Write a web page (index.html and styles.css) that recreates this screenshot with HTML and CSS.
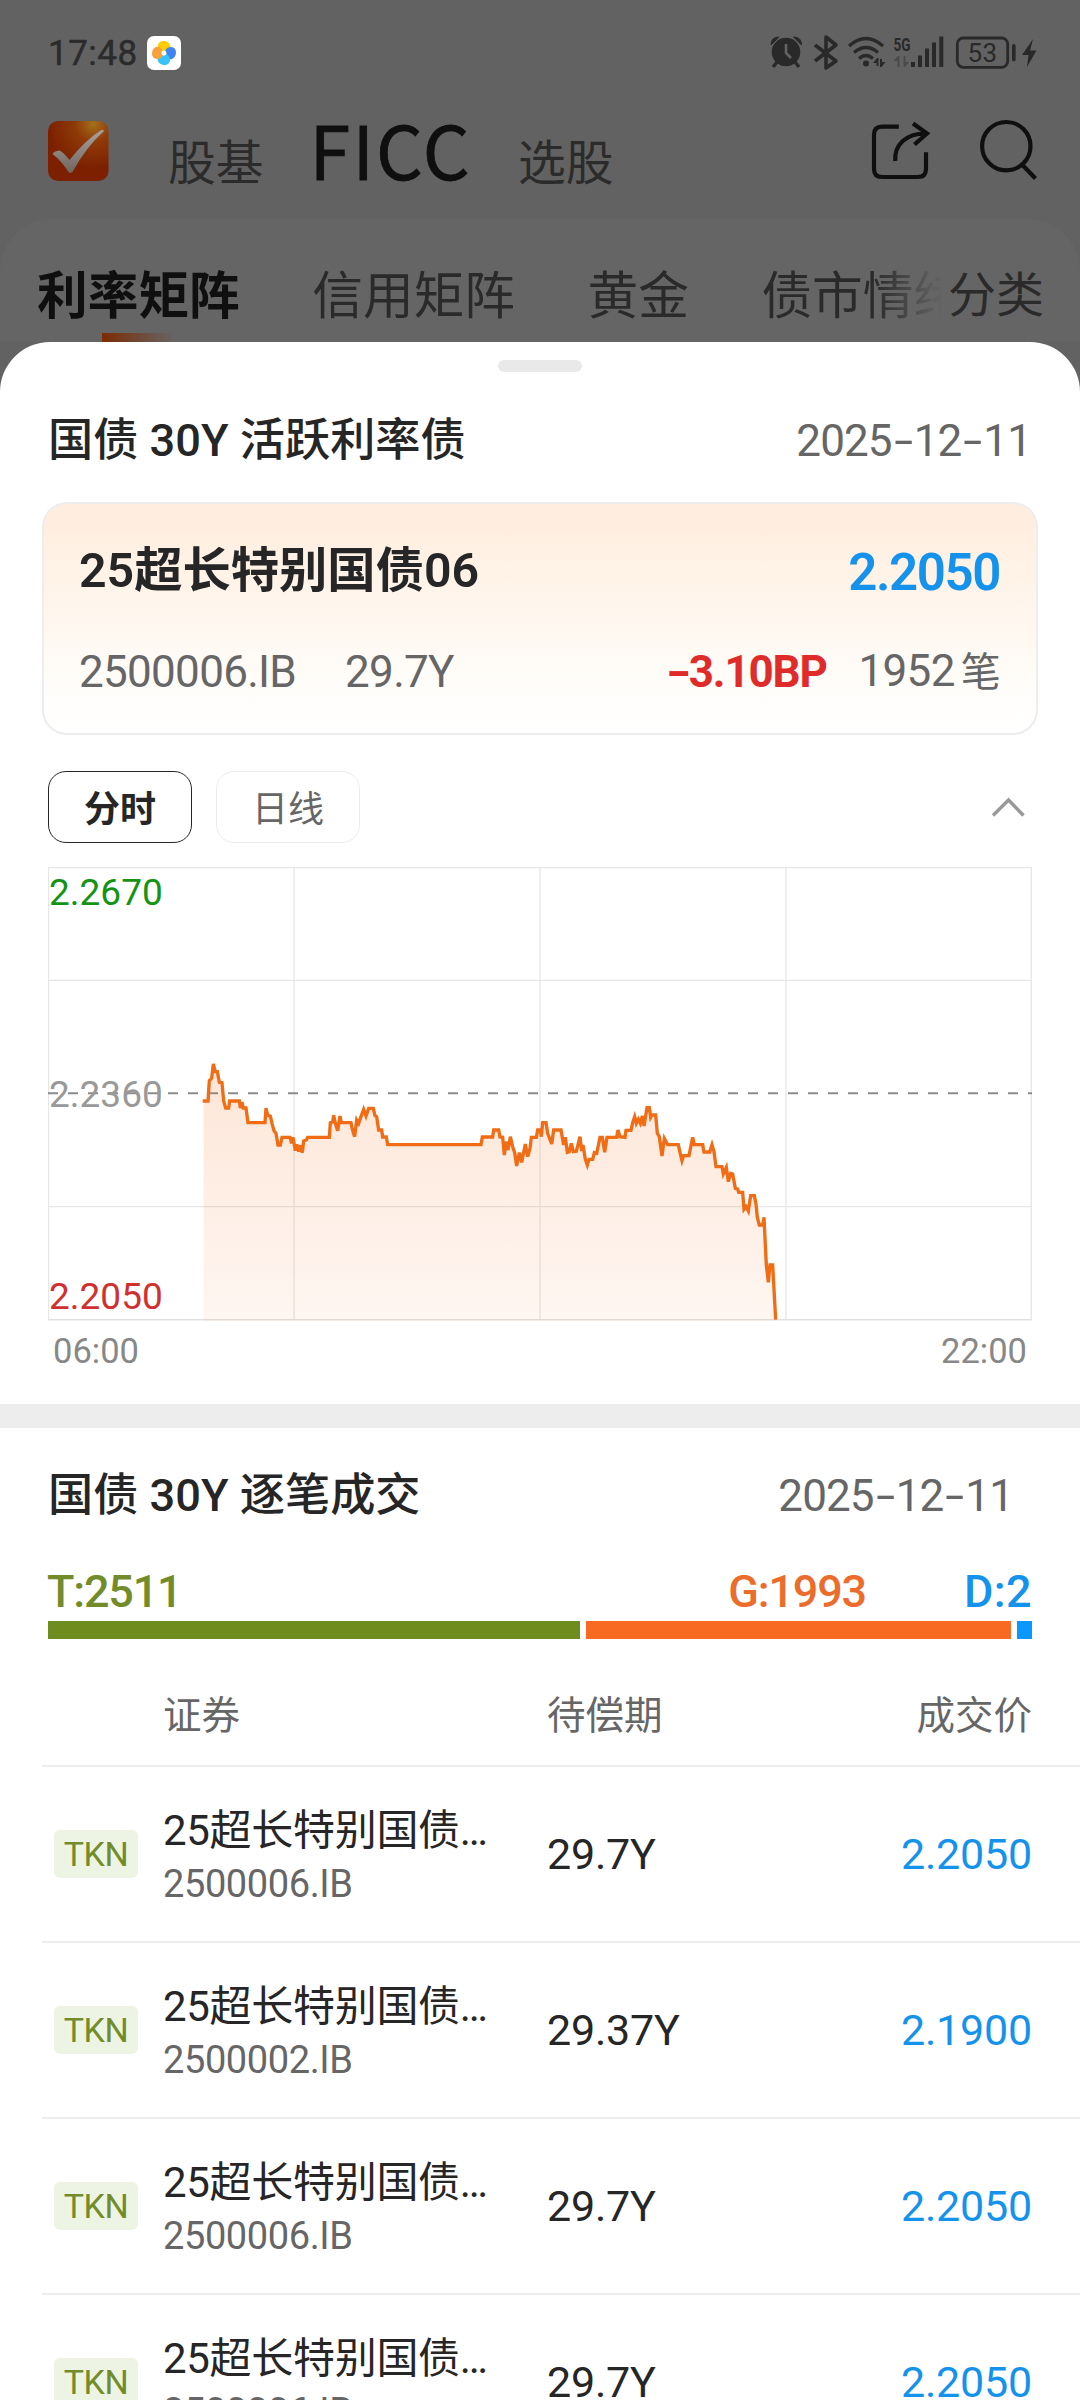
FILE: index.html
```html
<!DOCTYPE html>
<html lang="zh-CN">
<head>
<meta charset="utf-8">
<title>FICC 利率矩阵</title>
<link rel="stylesheet" href="styles.css">
</head>
<body>
<div class="status">
  <span class="clock">17:48</span>
  <svg class="app-badge" width="34" height="34" viewBox="-17 -17 34 34">
    <rect x="-17" y="-17" width="34" height="34" rx="7" fill="#fff"/>
    <path d="M-6 -7C-6 -13.500 4 -13.500 6 -8C7 -5 5.500 -2.500 3 -1.500C2 -3 -1 -3 -2.200 -1C-5 -2.500 -6 -4.500 -6 -7Z" fill="#fc0"/>
    <path transform="rotate(90)" d="M-6 -7C-6 -13.500 4 -13.500 6 -8C7 -5 5.500 -2.500 3 -1.500C2 -3 -1 -3 -2.200 -1C-5 -2.500 -6 -4.500 -6 -7Z" fill="#3f84f0"/>
    <path transform="rotate(180)" d="M-6 -7C-6 -13.500 4 -13.500 6 -8C7 -5 5.500 -2.500 3 -1.500C2 -3 -1 -3 -2.200 -1C-5 -2.500 -6 -4.500 -6 -7Z" fill="#38c1fa"/>
    <path transform="rotate(270)" d="M-6 -7C-6 -13.500 4 -13.500 6 -8C7 -5 5.500 -2.500 3 -1.500C2 -3 -1 -3 -2.200 -1C-5 -2.500 -6 -4.500 -6 -7Z" fill="#f7a13c"/>
    <circle r="2.200" fill="#fff"/>
  </svg>
  <svg class="status-icons" width="268" height="36" viewBox="770 35 268 36">
    <g fill="#292929">
      <circle cx="786" cy="52" r="14.300"/>
      <path d="M771 45q0-8 8-8zM801.500 45q0-8-8-8z" stroke="#292929" stroke-width="1"/>
      <path d="M777 62l-4 5M795 62l4 5" stroke="#292929" stroke-width="3.500"/>
      <path d="M786 44v9l5 5" fill="none" stroke="#636363" stroke-width="2.600"/>
      <path d="M815 45l21 16-10 7V37l10 8-21 16" fill="none" stroke="#292929" stroke-width="3.600" stroke-linejoin="round"/>
      <path d="M849 46q17-15 34 0M854 52.500q12-10 24 0M859 58.500q7-6 14 0" fill="none" stroke="#292929" stroke-width="3.200"/>
      <circle cx="866" cy="63.500" r="3"/>
      <path d="M873 63l4-5h1.500v8h-2v-3zM885.500 62l-4 5H880v-8h2v3z"/>
      <path d="M893 61l5-5h1.500v11h-2v-6zM909 62l-4 5h-1.500V56h2v6z" opacity=".4"/>
      <path d="M911 62h4v5H911zM918 55.500h4V67H918zM925 48.500h4V67H925zM932 42.500h4V67H932zM939.300 36.500h4V67h-4z"/>
      <rect x="957.300" y="38" width="50.400" height="29.300" rx="6" fill="none" stroke="#292929" stroke-width="2.800"/>
      <rect x="1012" y="44" width="3.600" height="17.500" rx="1.800"/>
      <path d="M1033 39l-11 16h6.500l-1.500 12 9.500-16.500H1030z"/>
      <text x="893.500" y="50.500" class="net" textLength="17" lengthAdjust="spacingAndGlyphs">5G</text>
      <text x="982.500" y="61.500" class="battery" text-anchor="middle">53</text>
    </g>
  </svg>
</div>

<header class="topbar">
  <svg class="logo" width="61" height="61" viewBox="48 121 61 61">
    <defs>
      <radialGradient id="lg" cx=".75" cy=".05" r=".75"><stop offset="0" stop-color="#a4701a"/><stop offset=".4" stop-color="#8f3a08"/><stop offset="1" stop-color="#7c2000"/></radialGradient>
      <linearGradient id="ck" x1="0" y1="0" x2="0" y2="1"><stop offset="0" stop-color="#a8a29e"/><stop offset="1" stop-color="#6f6560"/></linearGradient>
    </defs>
    <rect x="48" y="121" width="60.500" height="60" rx="10" fill="url(#lg)"/>
    <path d="M52.500 154q1-3 7-3.500 4 2 10 9.500 16-20 31-29.500 4-2 3 1-17 15-31 40.500-2 2-4 0-7-11-16-18z" fill="url(#ck)"/>
  </svg>
  <nav class="main-nav">
    <span>股基</span><span class="on">FICC</span><span>选股</span>
  </nav>
  <svg width="170" height="64" viewBox="870 119 170 64" fill="none" stroke="#0f0f0f" stroke-width="4.200">
    <path d="M898.800 126.700H882q-8 0-8 8V169q0 8 8 8H918q8 0 8-8V152.300"/>
    <path d="M895.300 161C894 145 906 133 926.500 133.500M913 123.500l14 10-12.500 11"/>
    <circle cx="1006.300" cy="146.200" r="24.200"/>
    <path d="M1021.500 164l14 14.500"/>
  </svg>
</header>

<div class="panel">
  <div class="cats">
    <span class="on">利率矩阵</span><span>信用矩阵</span><span>黄金</span><span class="fade">债市情绪</span>
  </div>
  <span class="sort">分类</span>
  <i class="underline"></i>
</div>

<main class="sheet">
  <i class="handle"></i>
  <div class="title-row">
    <h2>国债 30Y 活跃利率债</h2>
    <span class="date">2025<b>-</b>12<b>-</b>11</span>
  </div>
  <section class="card">
    <div class="card-row top"><span class="name">25超长特别国债06</span><span class="price">2.2050</span></div>
    <div class="card-row sub">
      <span class="code">2500006.IB</span><span class="term">29.7Y</span>
      <span class="bp"><b>-</b>3.10BP</span><span class="count">1952<em>笔</em></span>
    </div>
  </section>
  <div class="switch">
    <button class="on">分时</button><button>日线</button>
    <svg width="36" height="24" viewBox="990 794 36 24" fill="none" stroke="#999" stroke-width="3.400"><path d="M993 814.500l15.500-15.500 15 15.500"/></svg>
  </div>
  <div class="chart">
    <svg width="984" height="454" viewBox="0 0 2952 1362">
      <defs><linearGradient id="area" x1="0" y1="590" x2="0" y2="1358" gradientUnits="userSpaceOnUse"><stop offset="0" stop-color="#f56a16" stop-opacity=".17"/><stop offset="1" stop-color="#f56a16" stop-opacity=".06"/></linearGradient></defs>
      <path d="M1.500 2H2950V1358H1.500ZM1.500 340H2950M1.500 1019H2950M738 2V1358M1476 2V1358M2214 2V1358" fill="none" stroke="#e7e7e7" stroke-width="4"/>
      <path d="M0 1358H2952" stroke="#e0e0e0" stroke-width="4"/>
      <path d="M0 679H2952" stroke="#8c8c8c" stroke-width="6" stroke-dasharray="30 30"/>
      <path class="area" fill="url(#area)" d="M467 1362V702L480 702 484 641 491 634 496 591 502 614 508 614 514 646 522 647 527 702 533 723 542 723 545 702 574 702 577 723 582 705 586 723 594 723 600 767 651 767 654 723 659 745 667 747 672 769 678 791 684 799 690 834 697 834 702 811 726 811 731 829 735 811 742 851 746 832 752 854 756 834 763 857 767 822 775 819 779 811 844 811 847 767 854 765 857 745 862 769 869 791 876 747 880 767 909 767 913 787 920 809 926 759 932 769 940 746 947 727 954 747 962 724 976 724 981 746 986 749 992 789 1001 789 1004 810 1015 810 1019 833 1299 833 1303 810 1334 810 1337 789 1352 789 1356 810 1364 811 1369 864 1374 824 1380 849 1387 809 1394 839 1400 857 1406 897 1414 857 1421 886 1432 831 1439 869 1446 844 1450 811 1465 811 1469 789 1477 789 1480 809 1484 767 1494 767 1499 799 1511 831 1517 789 1539 789 1547 834 1552 811 1558 856 1564 854 1570 829 1576 854 1585 853 1596 809 1601 852 1605 834 1612 877 1618 894 1623 877 1634 877 1639 857 1646 859 1656 811 1663 811 1670 856 1677 811 1706 811 1710 789 1716 809 1731 811 1734 790 1749 790 1754 767 1760 749 1765 769 1771 757 1777 769 1783 747 1788 777 1797 722 1804 722 1808 751 1812 744 1823 744 1828 799 1834 809 1842 867 1849 814 1859 833 1891 833 1896 856 1902 881 1907 866 1923 866 1934 811 1939 833 1964 833 1968 855 1985 855 1992 833 1998 854 2004 899 2022 899 2026 921 2035 901 2041 944 2048 919 2054 921 2062 964 2069 966 2072 976 2084 976 2088 1027 2094 1019 2101 1032 2108 986 2119 986 2124 1011 2128 1051 2134 1074 2144 1074 2148 1051 2155 1194 2161 1246 2166 1194 2174 1194 2183 1358V1362Z"/>
      <path fill="none" stroke="#f06c15" stroke-width="10" d="M464 702L480 702 484 641 491 634 496 591 502 614 508 614 514 646 522 647 527 702 533 723 542 723 545 702 574 702 577 723 582 705 586 723 594 723 600 767 651 767 654 723 659 745 667 747 672 769 678 791 684 799 690 834 697 834 702 811 726 811 731 829 735 811 742 851 746 832 752 854 756 834 763 857 767 822 775 819 779 811 844 811 847 767 854 765 857 745 862 769 869 791 876 747 880 767 909 767 913 787 920 809 926 759 932 769 940 746 947 727 954 747 962 724 976 724 981 746 986 749 992 789 1001 789 1004 810 1015 810 1019 833 1299 833 1303 810 1334 810 1337 789 1352 789 1356 810 1364 811 1369 864 1374 824 1380 849 1387 809 1394 839 1400 857 1406 897 1414 857 1421 886 1432 831 1439 869 1446 844 1450 811 1465 811 1469 789 1477 789 1480 809 1484 767 1494 767 1499 799 1511 831 1517 789 1539 789 1547 834 1552 811 1558 856 1564 854 1570 829 1576 854 1585 853 1596 809 1601 852 1605 834 1612 877 1618 894 1623 877 1634 877 1639 857 1646 859 1656 811 1663 811 1670 856 1677 811 1706 811 1710 789 1716 809 1731 811 1734 790 1749 790 1754 767 1760 749 1765 769 1771 757 1777 769 1783 747 1788 777 1797 722 1804 722 1808 751 1812 744 1823 744 1828 799 1834 809 1842 867 1849 814 1859 833 1891 833 1896 856 1902 881 1907 866 1923 866 1934 811 1939 833 1964 833 1968 855 1985 855 1992 833 1998 854 2004 899 2022 899 2026 921 2035 901 2041 944 2048 919 2054 921 2062 964 2069 966 2072 976 2084 976 2088 1027 2094 1019 2101 1032 2108 986 2119 986 2124 1011 2128 1051 2134 1074 2144 1074 2148 1051 2155 1194 2161 1246 2166 1194 2174 1194 2183 1358"/>
    </svg>
    <div class="y-axis"><span class="hi">2.2670</span><span class="mid">2.2360</span><span class="lo">2.2050</span></div>
  </div>
  <div class="x-axis"><span>06:00</span><span>22:00</span></div>

  <div class="divider"></div>

  <div class="title-row trades">
    <h2>国债 30Y 逐笔成交</h2>
    <span class="date">2025<b>-</b>12<b>-</b>11</span>
  </div>
  <div class="tally"><span class="t">T:2511</span><span class="g">G:1993</span><span class="d">D:2</span></div>
  <div class="bars"><i class="t"></i><i class="g"></i><i class="d"></i></div>

  <div class="grid head"><span></span><span>证券</span><span>待偿期</span><span class="end">成交价</span></div>
  <div class="grid row"><span class="tag">TKN</span><div><p>25超长特别国债<u>…</u></p><small>2500006.IB</small></div><span>29.7Y</span><span class="end val">2.2050</span></div>
  <div class="grid row"><span class="tag">TKN</span><div><p>25超长特别国债<u>…</u></p><small>2500002.IB</small></div><span>29.37Y</span><span class="end val">2.1900</span></div>
  <div class="grid row"><span class="tag">TKN</span><div><p>25超长特别国债<u>…</u></p><small>2500006.IB</small></div><span>29.7Y</span><span class="end val">2.2050</span></div>
  <div class="grid row"><span class="tag">TKN</span><div><p>25超长特别国债<u>…</u></p><small>2500006.IB</small></div><span>29.7Y</span><span class="end val">2.2050</span></div>
</main>
</body>
</html>
```
FILE: styles.css
```css
* { box-sizing: border-box; margin: 0; padding: 0; }
html, body { width: 1080px; height: 2400px; overflow: hidden; }
body {
  display: flex;
  flex-direction: column;
  background: #626262;
  color: #262626;
  font-family: Roboto, "Noto Sans CJK SC", sans-serif;
  white-space: nowrap;
}
i, em, u { font-style: normal; text-decoration: none; }

/* Status bar */
.status { display: flex; align-items: center; height: 106px; padding: 0 42px 0 48px; flex: none; }
.clock { width: 99px; font-size: 35px; letter-spacing: .5px; color: #2b2b2b; -webkit-text-stroke: .5px #2b2b2b; }
.status-icons { margin-left: auto; }
.net { font-size: 19px; font-weight: 700; }
.battery { font-size: 26px; letter-spacing: .5px; }

/* App header */
.topbar { display: flex; align-items: center; height: 113px; padding: 0 40px 23px 48px; flex: none; }
.main-nav { display: flex; align-items: center; flex: 1; margin-left: 59px; color: #2b2b2b; font-size: 47.800px; line-height: 64px; }
.main-nav span { padding-top: 25px; }
.main-nav .on { padding: 0 46px 7px 46px; font: 400 73.500px/90px "Noto Sans CJK SC", sans-serif; letter-spacing: 2.200px; color: #0f0f0f; -webkit-text-stroke: .8px #0f0f0f; }

/* Dimmed panel */
.panel { display: grid; grid-template-columns: 905px 1fr; height: 123px; padding: 44px 36px 0 37px; background: #656565; border-radius: 52px 52px 0 0; flex: none; position: relative; }
.cats { display: flex; gap: 72.500px; overflow: hidden; height: 68px; font-size: 50.700px; line-height: 68px; color: #2a2a2a; }
.cats .on { font-weight: 700; color: #0f0f0f; }
.cats .fade { background: linear-gradient(90deg, #2a2a2a 110px, #656565 182px); background-clip: text; -webkit-background-clip: text; color: transparent; }
.sort { font-size: 48px; line-height: 66px; color: #2a2a2a; margin-left: 6px; }
.underline { position: absolute; left: 102px; top: 114px; width: 72px; height: 9px; background: linear-gradient(90deg, #7d2b04, #656565); }

/* Bottom sheet */
.sheet { flex: none; height: 2058px; background: #fff; border-radius: 50px 50px 0 0; overflow: hidden; }
.handle { display: block; width: 84px; height: 12px; margin: 18px auto 0; border-radius: 6px; background: #e9e9e9; }
.title-row { display: flex; justify-content: space-between; align-items: center; height: 130px; padding: 7px 49px 0 48px; }
.title-row h2 { font-size: 45.200px; font-weight: 500; line-height: 60px; }
.date { font-size: 44px; letter-spacing: -.9px; color: #666; }
.date b, .bp b { display: inline-block; width: 22px; text-align: center; font-weight: inherit; transform: scaleX(1.550); }

.card { height: 233px; margin: 0 42px; padding: 0 36px 0 35px; border: 2px solid #ededed; border-radius: 25px; background: linear-gradient(#ffeedf 8%, #fffdfa 80%, #fff); }
.card-row { display: flex; align-items: center; }
.card-row.top { height: 137px; justify-content: space-between; }
.name { font-size: 48.300px; font-weight: 600; line-height: 64px; padding-bottom: 3px; }
.price { font-size: 51px; font-weight: 600; letter-spacing: -1.400px; color: #1492ec; }
.card-row.sub { height: 62px; font-size: 44px; letter-spacing: -.7px; color: #666; }
.term { margin-left: 49px; }
.bp { margin-left: auto; color: #e02b2b; font-weight: 700; letter-spacing: -1.200px; }
.count { margin-left: 32px; line-height: 60px; }
.count em { font-size: 40px; margin-left: 6px; }

.switch { display: flex; align-items: center; height: 72px; margin: 36px 54px 0 48px; gap: 24px; }
.switch button { width: 144px; height: 72px; padding-bottom: 3px; border: 1.500px solid #ebebeb; border-radius: 18px; background: #fff; font: 400 36px/64px "Noto Sans CJK SC", sans-serif; color: #666; }
.switch button.on { border-color: #262626; color: #262626; font-weight: 700; }
.switch svg { margin-left: auto; }

.chart { display: grid; margin: 24px 48px 0; height: 454px; }
.chart > * { grid-area: 1 / 1; }
.y-axis { display: flex; flex-direction: column; justify-content: space-between; height: 454px; padding: 4px 0 3px 1px; font-size: 37px; line-height: 43px; }
.hi { color: #149414; }
.mid { color: #999; }
.lo { color: #d03030; }
.x-axis { display: flex; justify-content: space-between; margin: 5px 53px 0 53px; height: 78px; font-size: 34.500px; line-height: 50px; color: #888; }

.divider { height: 24px; background: #ededed; }

/* Trade list */
.title-row.trades { height: 132px; padding: 4px 67px 0 48px; }
.tally { display: flex; height: 61px; padding: 1px 48px 0 47px; font-size: 45px; line-height: 62px; font-weight: 500; letter-spacing: -1.200px; }
.tally .t { color: #738c2b; }
.tally .g { color: #ec6c2c; margin-left: auto; }
.tally .d { color: #1492ec; margin-left: 98px; letter-spacing: .4px; }
.bars { display: flex; gap: 6px; height: 18px; margin: 0 48px; }
.bars .t { background: #6f8c1f; flex: 532; }
.bars .g { background: #f86a21; flex: 425; }
.bars .d { background: #0a98ff; flex: 15; }
.grid { display: grid; grid-template-columns: 121px 384px 1fr auto; align-items: center; margin-left: 42px; padding-right: 48px; border-bottom: 2px solid #ededed; }
.grid.head { height: 128px; padding-top: 19px; font-size: 38.500px; color: #666; }
.grid.row { height: 176px; font-size: 43px; letter-spacing: -.2px; }
.row .tag { width: 84px; height: 48px; margin-left: 12px; border-radius: 6px; background: #edf4e3; color: #738c2b; font-size: 34px; line-height: 49px; text-align: center; letter-spacing: -.5px; }
.row p { line-height: 50px; font-size: 42px; letter-spacing: -.3px; margin-top: 7px; }
.row u { letter-spacing: -3px; }
.row small { display: block; font-size: 38px; line-height: 50px; letter-spacing: -.4px; color: #666; margin-top: 3px; }
.row .val { color: #1492ec; }
```
